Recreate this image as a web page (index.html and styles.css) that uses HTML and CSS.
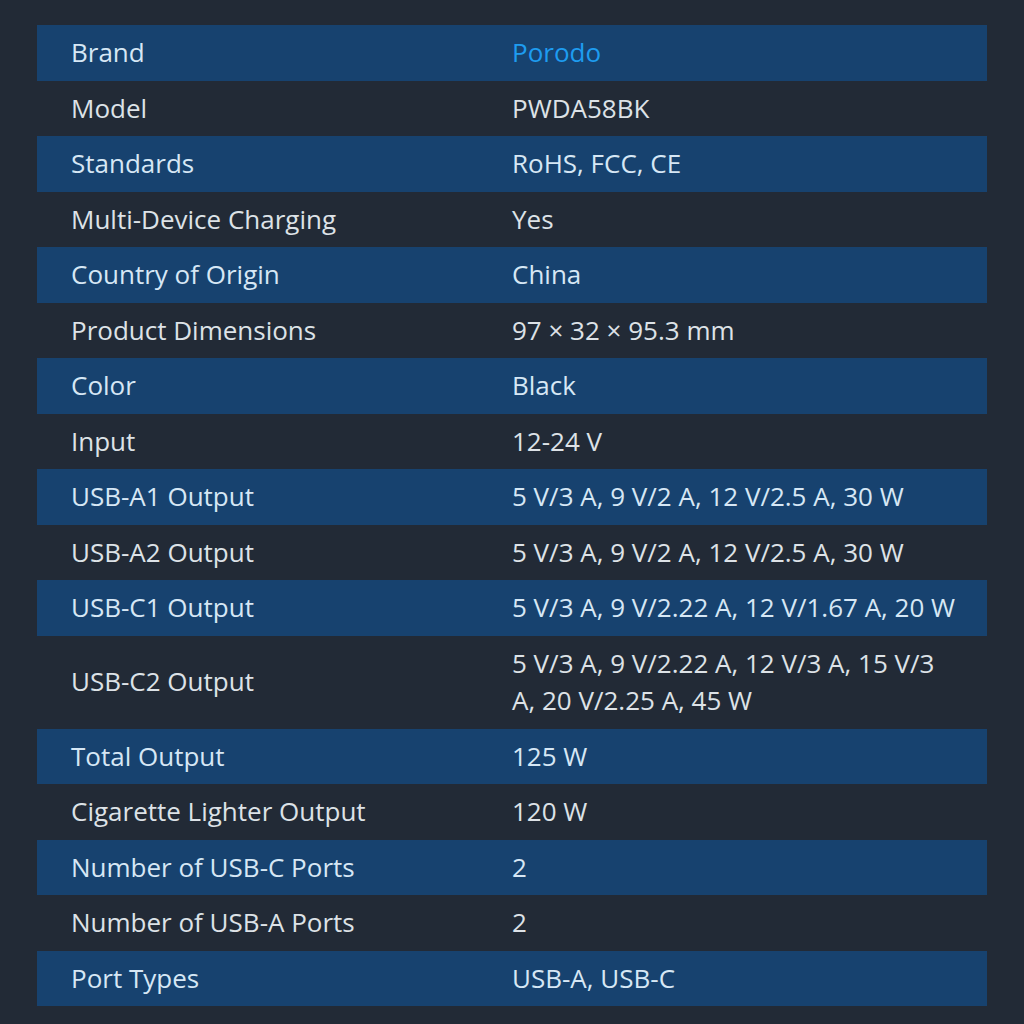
FILE: index.html
```html
<!DOCTYPE html>
<html lang="en">
<head>
<meta charset="utf-8">
<title>Specifications</title>
<link rel="stylesheet" href="styles.css">
</head>
<body>
<div class="page">
  <table class="specs">
    <colgroup><col class="c-label"><col class="c-value"></colgroup>
    <tbody>
      <tr class="alt"><th>Brand</th><td class="link">Porodo</td></tr>
      <tr><th>Model</th><td>PWDA58BK</td></tr>
      <tr class="alt"><th>Standards</th><td>RoHS, FCC, CE</td></tr>
      <tr><th>Multi-Device Charging</th><td>Yes</td></tr>
      <tr class="alt"><th>Country of Origin</th><td>China</td></tr>
      <tr><th>Product Dimensions</th><td>97 × 32 × 95.3 mm</td></tr>
      <tr class="alt"><th>Color</th><td>Black</td></tr>
      <tr><th>Input</th><td>12-24 V</td></tr>
      <tr class="alt"><th>USB-A1 Output</th><td>5 V/3 A, 9 V/2 A, 12 V/2.5 A, 30 W</td></tr>
      <tr><th>USB-A2 Output</th><td>5 V/3 A, 9 V/2 A, 12 V/2.5 A, 30 W</td></tr>
      <tr class="alt"><th>USB-C1 Output</th><td>5 V/3 A, 9 V/2.22 A, 12 V/1.67 A, 20 W</td></tr>
      <tr><th>USB-C2 Output</th><td>5 V/3 A, 9 V/2.22 A, 12 V/3 A, 15 V/3 A, 20 V/2.25 A, 45 W</td></tr>
      <tr class="alt"><th>Total Output</th><td>125 W</td></tr>
      <tr><th>Cigarette Lighter Output</th><td>120 W</td></tr>
      <tr class="alt"><th>Number of USB-C Ports</th><td>2</td></tr>
      <tr><th>Number of USB-A Ports</th><td>2</td></tr>
      <tr class="alt"><th>Port Types</th><td>USB-A, USB-C</td></tr>
    </tbody>
  </table>
</div>
</body>
</html>
```
FILE: styles.css
```css
html, body {
  margin: 0;
  padding: 0;
  background: #222a36;
}
.page {
  padding: 25px 37px;
}
.specs {
  width: 950px;
  border-collapse: collapse;
  table-layout: fixed;
  font-family: "Open Sans", "Noto Sans", sans-serif;
  font-size: 26px;
  line-height: 37.5px;
  color: #dde2e7;
}
.c-label,
.c-value {
  width: 475px;
}
.specs th,
.specs td {
  text-align: left;
  font-weight: 400;
  vertical-align: middle;
}
.specs th {
  padding: 9px 0 9px 34px;
}
.specs td {
  padding: 9px 27px 9px 0;
}
.specs tr.alt {
  background: #17426f;
  color: #d6e7f5;
}
.specs td.link {
  color: #1e9cf0;
}
```
